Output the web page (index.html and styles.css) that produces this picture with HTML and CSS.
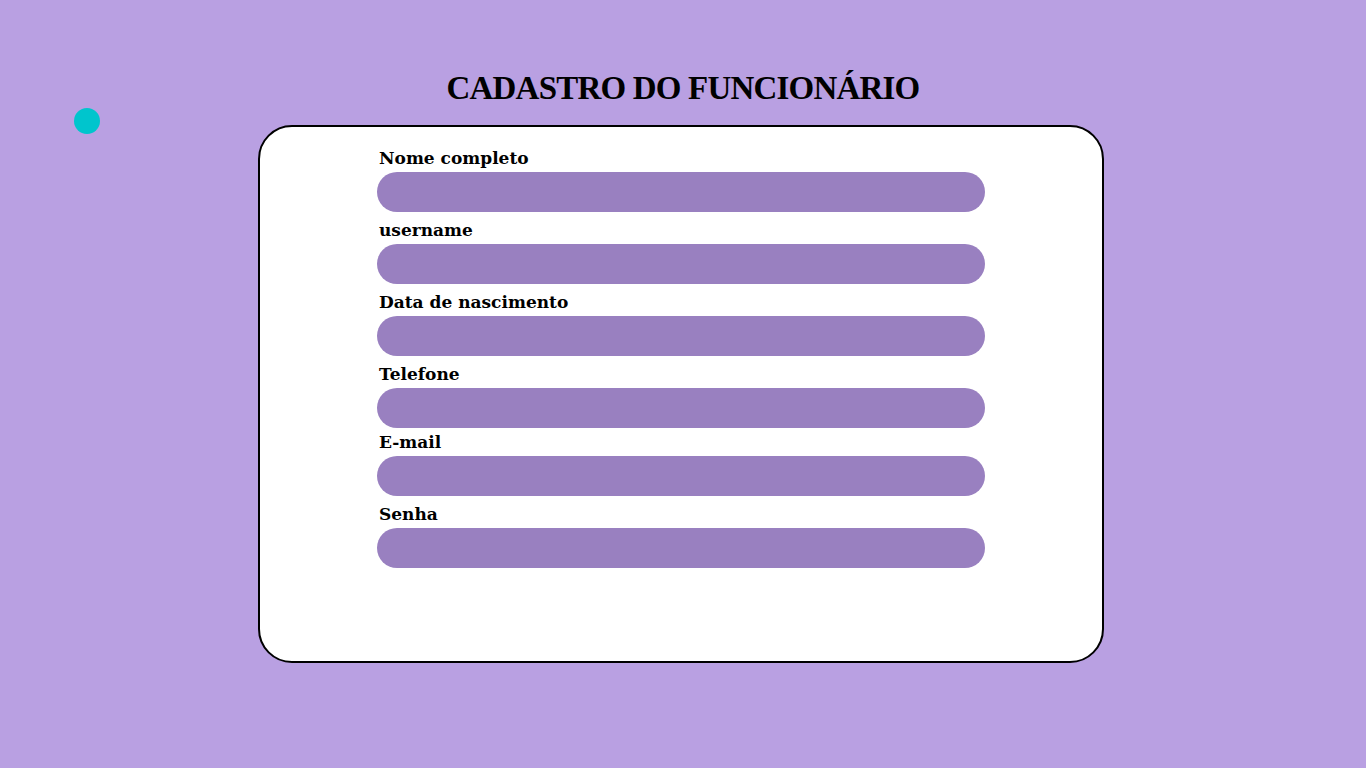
FILE: index.html
```html
<!DOCTYPE html>
<html lang="pt-BR">
<head>
<meta charset="utf-8">
<title>Cadastro do Funcionário</title>
<link rel="stylesheet" href="styles.css">
</head>
<body>
<span class="dot"></span>
<h1 class="title">CADASTRO DO FUNCIONÁRIO</h1>
<main class="card">
  <form class="form">
    <div class="field"><label class="label" for="nome">Nome completo</label><input class="input" id="nome" type="text"></div>
    <div class="field"><label class="label" for="user">username</label><input class="input" id="user" type="text"></div>
    <div class="field"><label class="label" for="nasc">Data de nascimento</label><input class="input" id="nasc" type="text"></div>
    <div class="field"><label class="label" for="tel">Telefone</label><input class="input" id="tel" type="text"></div>
    <div class="field field-tight"><label class="label" for="mail">E-mail</label><input class="input" id="mail" type="text"></div>
    <div class="field"><label class="label" for="senha">Senha</label><input class="input" id="senha" type="password"></div>
  </form>
</main>
</body>
</html>
```
FILE: styles.css
```css
html, body {
  margin: 0;
  height: 100%;
}
body {
  background: #b9a0e2;
  padding-top: 66px;
  box-sizing: border-box;
  position: relative;
  font-family: "DejaVu Serif", "Liberation Serif", serif;
  color: #000;
}
.dot {
  position: absolute;
  left: 74px;
  top: 108px;
  width: 26px;
  height: 26px;
  border-radius: 50%;
  background: #00c5cd;
}
.title {
  margin: 0 0 15px;
  text-align: center;
  font-family: "Liberation Serif", serif;
  font-weight: bold;
  font-size: 33px;
  line-height: 44px;
  letter-spacing: -0.8px;
}
.card {
  box-sizing: border-box;
  width: 846px;
  height: 538px;
  margin-left: 258px;
  background: #fff;
  border: 2px solid #000;
  border-radius: 34px;
  padding: 19px 0 0 117px;
}
.form {
  width: 608px;
  display: flex;
  flex-direction: column;
  gap: 6px;
}
.field {
  display: flex;
  flex-direction: column;
  gap: 2px;
}
.field-tight {
  margin-top: -4px;
}
.label {
  font-family: "DejaVu Serif", serif;
  font-weight: bold;
  font-size: 17px;
  line-height: 24px;
  padding-left: 2px;
}
.input {
  box-sizing: border-box;
  width: 608px;
  height: 40px;
  border: none;
  border-radius: 20px;
  background: #9980c0;
  outline: none;
  padding: 0 20px;
  font: inherit;
}
```
